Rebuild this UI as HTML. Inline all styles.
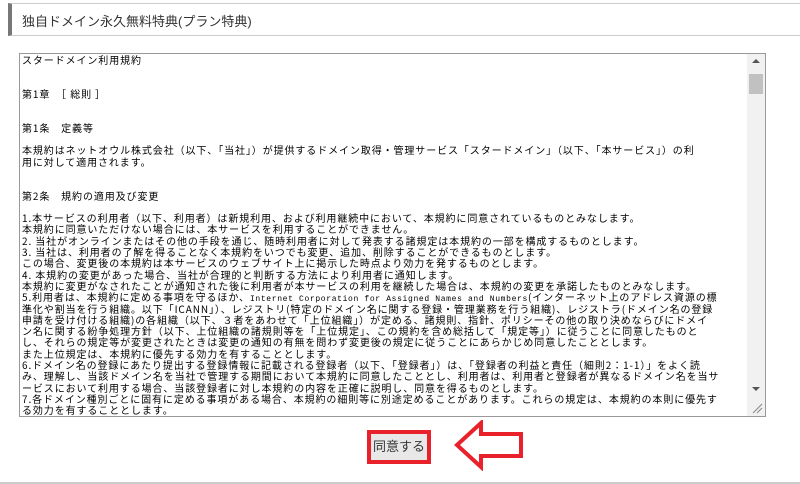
<!DOCTYPE html>
<html><head><meta charset="utf-8"><style>
body{margin:0;width:800px;height:484px;background:#fff;position:relative;overflow:hidden;font-family:"Liberation Sans","Noto Sans CJK JP",sans-serif}
.hd{position:absolute;left:8px;top:3px;width:800px;height:33px;border:1px solid #ccc;border-left:4px solid #777;box-sizing:border-box;background:#fff}
.hd span{position:absolute;left:10px;top:7px;font-size:13px;color:#333}
.ta{position:absolute;left:19px;top:53px;width:747px;height:364px;border:1px solid #999;box-sizing:border-box;overflow:hidden}
.tx{position:absolute;left:2px;top:0px;font-family:"Noto Sans CJK JP",sans-serif;font-size:10px;letter-spacing:0.9px;line-height:11.3px;white-space:pre;color:#000}
.tx div{height:11.3px;overflow:visible}
.m{font-family:"Liberation Mono",monospace;font-size:8px;letter-spacing:0.65px;line-height:0}
.sb{position:absolute;right:0;top:0;width:18px;height:344px;background:#f1f1f1}
.th{position:absolute;left:2px;top:20px;width:14px;height:20px;background:#c1c1c1}
.hr{position:absolute;left:0;top:482px;width:800px;height:2px;background:#ccc}
.btn{position:absolute;left:367px;top:430px;width:64px;height:34px;border:4px solid #e8212b;box-sizing:border-box;background:#e8e8e8;font-size:13px;text-align:center;line-height:26px;color:#333}
</style></head><body>
<div class="hd"><span>独自ドメイン永久無料特典(プラン特典)</span></div>
<div class="ta"><div class="tx"><div>スタードメイン利用規約</div><div></div><div></div><div>第1章　［ 総則 ］</div><div></div><div></div><div>第1条　定義等</div><div></div><div>本規約はネットオウル株式会社（以下、「当社」）が提供するドメイン取得・管理サービス「スタードメイン」（以下、「本サービス」）の利</div><div>用に対して適用されます。</div><div></div><div></div><div>第2条　規約の適用及び変更</div><div></div><div>1.本サービスの利用者（以下、利用者）は新規利用、および利用継続中において、本規約に同意されているものとみなします。</div><div>本規約に同意いただけない場合には、本サービスを利用することができません。</div><div>2. 当社がオンラインまたはその他の手段を通じ、随時利用者に対して発表する諸規定は本規約の一部を構成するものとします。</div><div>3. 当社は、利用者の了解を得ることなく本規約をいつでも変更、追加、削除することができるものとします。</div><div>この場合、変更後の本規約は本サービスのウェブサイト上に掲示した時点より効力を発するものとします。</div><div>4. 本規約の変更があった場合、当社が合理的と判断する方法により利用者に通知します。</div><div>本規約に変更がなされたことが通知された後に利用者が本サービスの利用を継続した場合は、本規約の変更を承諾したものとみなします。</div><div>5.利用者は、本規約に定める事項を守るほか、<span class="m">Internet Corporation for Assigned Names and Numbers</span>(インターネット上のアドレス資源の標</div><div>準化や割当を行う組織。以下「ICANN」）、レジストリ(特定のドメイン名に関する登録・管理業務を行う組織)、レジストラ(ドメイン名の登録</div><div>申請を受け付ける組織)の各組織（以下、３者をあわせて「上位組織」）が定める、諸規則、指針、ポリシーその他の取り決めならびにドメイ</div><div>ン名に関する紛争処理方針（以下、上位組織の諸規則等を「上位規定」、この規約を含め総括して「規定等」）に従うことに同意したものと</div><div>し、それらの規定等が変更されたときは変更の通知の有無を問わず変更後の規定に従うことにあらかじめ同意したこととします。</div><div>また上位規定は、本規約に優先する効力を有することとします。</div><div>6.ドメイン名の登録にあたり提出する登録情報に記載される登録者（以下、「登録者」）は、「登録者の利益と責任（細則2：1-1）」をよく読</div><div>み、理解し、当該ドメイン名を当社で管理する期間において本規約に同意したこととし、利用者は、利用者と登録者が異なるドメイン名を当サ</div><div>ービスにおいて利用する場合、当該登録者に対し本規約の内容を正確に説明し、同意を得るものとします。</div><div>7.各ドメイン種別ごとに固有に定める事項がある場合、本規約の細則等に別途定めることがあります。これらの規定は、本規約の本則に優先す</div><div>る効力を有することとします。</div></div>
<div class="sb"><div style="position:absolute;left:5px;top:5px;border:4px solid transparent;border-bottom:4px solid #555;border-top:0"></div><div class="th"></div><div style="position:absolute;left:5px;top:333px;border:4px solid transparent;border-top:4px solid #555;border-bottom:0"></div></div>
<div style="position:absolute;right:0;bottom:0;width:18px;height:18px;background:#f1f1f1"><svg width="18" height="18"><path d="M6 15 L15 6 M10 15 L15 10" stroke="#888" stroke-width="1"/></svg></div>
</div>
<div class="btn">同意する</div>
<svg style="position:absolute;left:453px;top:420px" width="73" height="51"><path d="M4 25 L28 3 L28 14 L68 14 L68 36 L28 36 L28 47 Z" fill="#fff" stroke="#e8212b" stroke-width="4" stroke-linejoin="miter"/></svg>
<div class="hr"></div>
</body></html>
